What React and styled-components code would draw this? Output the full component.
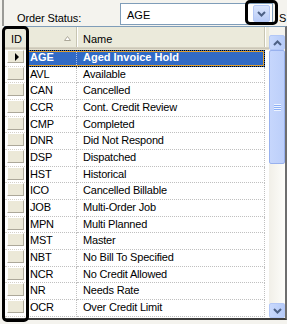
import styled, { createGlobalStyle } from 'styled-components';

const GlobalStyle = createGlobalStyle`
  html, body { margin: 0; padding: 0; background: #f4f3ee; }
  body {
    font-family: "Liberation Sans", Arial, sans-serif;
    font-size: 11px;
    color: #000;
  }
`;

const statuses = [
    ['AGE', 'Aged Invoice Hold'],
    ['AVL', 'Available'],
    ['CAN', 'Cancelled'],
    ['CCR', 'Cont. Credit Review'],
    ['CMP', 'Completed'],
    ['DNR', 'Did Not Respond'],
    ['DSP', 'Dispatched'],
    ['HST', 'Historical'],
    ['ICO', 'Cancelled Billable'],
    ['JOB', 'Multi-Order Job'],
    ['MPN', 'Multi Planned'],
    ['MST', 'Master'],
    ['NBT', 'No Bill To Specified'],
    ['NCR', 'No Credit Allowed'],
    ['NR', 'Needs Rate'],
    ['OCR', 'Over Credit Limit'],
];

const Chevron = ({ up }) => (
    <svg width="9" height="6" viewBox="0 0 9 6">
        <polyline
            points={up ? '1,5 4.5,1.5 8,5' : '1,1 4.5,4.5 8,1'}
            fill="none"
            stroke="#4d6185"
            strokeWidth="2"
        />
    </svg>
);

const StatusPicker = () => {
    const selected = 'AGE';
    return (
        <Screen>
            <GlobalStyle />
            {/* filter bar */}
            <TopBar>
                <Label>Order Status:</Label>
                <Combo>
                    <ComboText>AGE</ComboText>
                    <ComboButton>
                        <Chevron />
                    </ComboButton>
                </Combo>
                <Clipped>S</Clipped>
            </TopBar>

            {/* grid */}
            <Panel>
                <Table>
                    <Header>
                        <HeadCell $w={72} $pad={6}>
                            ID
                            <SortArrow width="7" height="5" viewBox="0 0 7 5">
                                <polygon points="3.5,0.5 6.5,4.5 0.5,4.5" fill="#fff" stroke="#aca899" strokeWidth="1" />
                            </SortArrow>
                        </HeadCell>
                        <HeadCell $w={188} $pad={6}>Name</HeadCell>
                    </Header>
                    {statuses.map(([code, name]) => {
                        const active = code === selected;
                        return (
                            <Row key={code} $active={active}>
                                <SelectorCell>
                                    <SelectorButton>{active && <Pointer />}</SelectorButton>
                                </SelectorCell>
                                <Cell $active={active} $pad={3}>{code}</Cell>
                                <Cell $active={active} $pad={6}>{name}</Cell>
                            </Row>
                        );
                    })}
                </Table>
                <ScrollBar>
                    <ScrollButton>
                        <Chevron up />
                    </ScrollButton>
                    <Thumb>
                        <Grip />
                    </Thumb>
                    <Track />
                    <ScrollButton>
                        <Chevron />
                    </ScrollButton>
                </ScrollBar>
            </Panel>

            <Callout $left={2} $top={26} $w={27} $h={296} />
            <Callout $left={245} $top={0} $w={33} $h={25} />
        </Screen>
    );
};

export default StatusPicker;

const Screen = styled.div`
    position: relative;
    width: 287px;
    height: 324px;
    overflow: hidden;
    background: #f4f3ee;
`;

const TopBar = styled.div`
    display: flex;
    align-items: flex-start;
    height: 26px;
    margin-left: 2px;
    border-left: 2px solid #9a9a96;
    padding-left: 13px;
    box-sizing: border-box;
`;

const Label = styled.div`
    width: 103px;
    margin-top: 11px;
    line-height: 14px;
    letter-spacing: -0.1px;
`;

const Combo = styled.div`
    display: flex;
    align-items: flex-start;
    width: 153px;
    height: 22px;
    margin-top: 3px;
    box-sizing: border-box;
    border: 1px solid #7f9db9;
    background: #fff;
`;

const ComboText = styled.div`
    padding: 4px 0 0 6px;
    line-height: 14px;
`;

const ComboButton = styled.div`
    display: flex;
    align-items: center;
    justify-content: center;
    width: 17px;
    height: 17px;
    margin: 1px 2px 0 auto;
    box-sizing: border-box;
    border: 1px solid #b4c8f6;
    border-radius: 2px;
    background: linear-gradient(#dbe6fd, #b8cbf7);
`;

const Clipped = styled.div`
    margin: 11px 0 0 6px;
    line-height: 14px;
`;

const Panel = styled.div`
    display: flex;
    height: 294px;
    margin-left: 4px;
    box-sizing: border-box;
    border-top: 1px solid #7f9db9;
    border-left: 1px solid #7f9db9;
    border-right: 2px solid #6e6e6e;
    border-bottom: 2px solid #3c3c3c;
`;

const Table = styled.div`
    width: 265px;
    background: #fff;
`;

const Header = styled.div`
    display: flex;
    height: 23px;
    background: #ebeadb;
    box-shadow: inset 0 -1px #e2decd, inset 0 -2px #cbc7b8, inset 0 -3px #d6d2c2;
`;

const HeadCell = styled.div`
    position: relative;
    width: ${(p) => p.$w}px;
    padding: 5px 0 0 ${(p) => p.$pad}px;
    box-sizing: border-box;
    line-height: 14px;
    border-right: 1px solid #c7c5b2;
    box-shadow: 1px 0 #fff;
    height: 20px;
    margin-top: 0;
`;

const SortArrow = styled.svg`
    position: absolute;
    right: 5px;
    top: 9px;
`;

const Row = styled.div`
    position: relative;
    display: grid;
    grid-template-columns: 22px 50px 188px;
    height: 16.67px;

    &::after {
        content: '';
        display: ${(p) => (p.$active ? 'block' : 'none')};
        position: absolute;
        left: 22px;
        top: 0;
        width: 238px;
        height: 100%;
        box-sizing: border-box;
        border: 1px dotted #000;
        box-shadow: inset 0 0 0 1px #e0a030, 0 0 0 0 transparent;
        outline: 1px solid transparent;
    }
`;

const SelectorCell = styled.div`
    padding: 0 0 0 2px;
    border-bottom: 1px dotted #d4d0c8;
    box-sizing: border-box;
`;

const SelectorButton = styled.div`
    display: flex;
    align-items: center;
    justify-content: center;
    width: 17px;
    height: 13px;
    box-sizing: border-box;
    background: #ece9d8;
    border: 1px solid;
    border-color: #fff #aca899 #aca899 #fff;
`;

const Pointer = styled.span`
    width: 0;
    height: 0;
    margin-left: 2px;
    border-top: 4px solid transparent;
    border-bottom: 4px solid transparent;
    border-left: 4px solid #000;
`;

const Cell = styled.div`
    padding-left: ${(p) => p.$pad}px;
    box-sizing: border-box;
    line-height: 14px;
    white-space: nowrap;
    overflow: hidden;
    letter-spacing: ${(p) => (p.$active ? '0' : '-0.2px')};
    font-weight: ${(p) => (p.$active ? 'bold' : 'normal')};
    color: ${(p) => (p.$active ? '#fff' : '#000')};
    background: ${(p) => (p.$active ? '#316ac5' : 'transparent')};
    border-right: 1px dotted ${(p) => (p.$active ? '#a8c0ec' : '#c0c0c0')};
    border-bottom: 1px dotted #c0c0c0;
`;

const ScrollBar = styled.div`
    display: flex;
    flex-direction: column;
    width: 16px;
    padding: 8px 0 0 0;
    margin-left: 0;
    box-sizing: border-box;
`;

const ScrollButton = styled.div`
    display: flex;
    align-items: center;
    justify-content: center;
    height: 15px;
    box-sizing: border-box;
    border: 1px solid #b4c8f6;
    border-radius: 2px;
    background: linear-gradient(to right, #c9d9fd, #b6cbf8);
`;

const Thumb = styled.div`
    display: flex;
    align-items: center;
    justify-content: center;
    height: 114px;
    box-sizing: border-box;
    border: 1px solid #98b1ee;
    border-radius: 2px;
    background: linear-gradient(to right, #c6d6fc, #bccffa);
`;

const Grip = styled.div`
    width: 7px;
    height: 7px;
    background: repeating-linear-gradient(#eef4fe 0 1px, #8cb0f8 1px 2px);
`;

const Track = styled.div`
    flex: 1;
    background: linear-gradient(to right, #f1efe8, #fdfdfa);
`;

const Callout = styled.div`
    position: absolute;
    left: ${(p) => p.$left}px;
    top: ${(p) => p.$top}px;
    width: ${(p) => p.$w}px;
    height: ${(p) => p.$h}px;
    box-sizing: border-box;
    border: 3px solid #000;
    border-radius: 5px;
    pointer-events: none;
`;
